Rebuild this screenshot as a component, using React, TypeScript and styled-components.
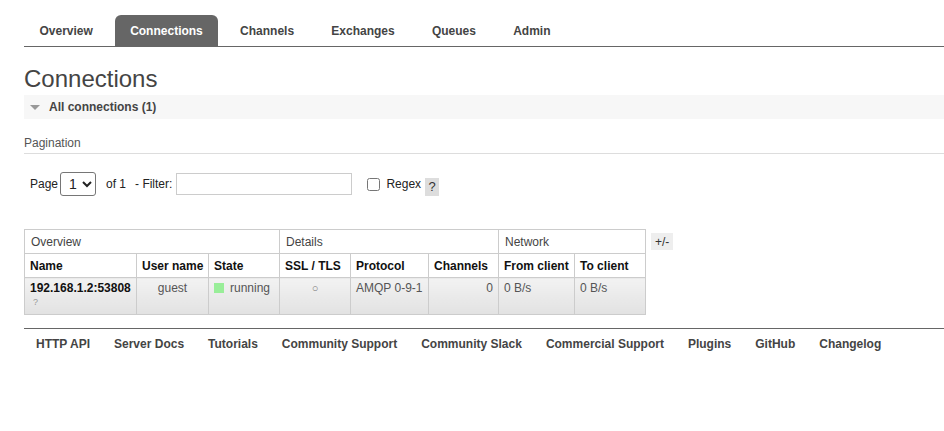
import React from "react";
import styled, { createGlobalStyle } from "styled-components";

const Global = createGlobalStyle`
  html, body { margin: 0; padding: 0; background: #fff; }
  body { font-family: "Liberation Sans", Arial, sans-serif; font-size: 12px; color: #444; }
`;

const Page = styled.div`
  padding: 15px 0 0 24px;
`;

const Tabs = styled.ul`
  display: flex;
  gap: 7.25px;
  list-style: none;
  margin: 0;
  padding: 0 0 0 0.5px;
  border-bottom: 1px solid #666;
`;

const Tab = styled.li<{ $active?: boolean }>`
  height: 31px;
  padding: 0 15px;
  display: flex;
  align-items: center;
  font-weight: bold;
  font-size: 12px;
  border-radius: 6px 6px 0 0;
  color: ${(p) => (p.$active ? "#fff" : "#444")};
  background: ${(p) => (p.$active ? "#666" : "transparent")};
`;

const Title = styled.h1`
  margin: 18px 0 2px;
  font-size: 24px;
  font-weight: normal;
  line-height: 28px;
  color: #444;
`;

const SectionBar = styled.div`
  height: 24px;
  background: #f7f7f7;
  display: flex;
  align-items: center;
  gap: 9px;
  padding-left: 6px;
  font-weight: bold;
  color: #444;
`;

const Triangle = styled.span`
  width: 0;
  height: 0;
  border-left: 5px solid transparent;
  border-right: 5px solid transparent;
  border-top: 5px solid #999;
  margin-top: 1px;
`;

const SubTitle = styled.div`
  margin-top: 17px;
  padding-bottom: 3px;
  border-bottom: 1px solid #ddd;
  line-height: 14px;
  color: #555;
`;

const FilterRow = styled.div`
  display: flex;
  align-items: center;
  margin-top: 18px;
  padding-left: 6px;
  color: #222;
  font-size: 12px;
`;

const Select = styled.select`
  margin-left: 2px;
  width: 36px;
  height: 24px;
  font-family: "Liberation Sans", Arial, sans-serif;
  font-size: 14px;
  color: #222;
  border: 1px solid #767676;
  border-radius: 3px;
  background: #fff;
  padding: 0 0 0 4px;
`;

const Label = styled.span<{ $ml?: number }>`
  margin-left: ${(p) => p.$ml ?? 0}px;
`;

const TextInput = styled.input`
  margin-left: 4px;
  width: 176px;
  height: 22px;
  box-sizing: border-box;
  border: 1px solid #ccc;
  padding: 0 4px;
`;

const Check = styled.input`
  margin: 0 0 0 15px;
  width: 13px;
  height: 13px;
`;

const Help = styled.span`
  margin: 5px 0 0 4px;
  background: #ddd;
  width: 14px;
  height: 18px;
  display: inline-flex;
  align-items: center;
  justify-content: center;
  font-size: 13px;
  color: #333;
`;

const TableWrap = styled.div`
  display: flex;
  align-items: flex-start;
  gap: 5px;
  margin-top: 33px;
`;

const Table = styled.table`
  border-collapse: collapse;
  table-layout: fixed;
  width: 621px;
`;

const GroupTh = styled.th`
  height: 24px;
  box-sizing: border-box;
  border: 1px solid #ccc;
  text-align: left;
  padding: 0 6px;
  font-weight: normal;
  color: #444;
  background: #fff;
`;

const ColTh = styled.th`
  height: 24px;
  box-sizing: border-box;
  border: 1px solid #ccc;
  text-align: left;
  padding: 0 5px;
  font-weight: bold;
  color: #111;
  background: #fff;
  white-space: nowrap;
`;

const Td = styled.td<{ $align?: string }>`
  border: 1px solid #ccc;
  vertical-align: top;
  padding: 3px 5px 4px;
  line-height: 14px;
  text-align: ${(p) => p.$align ?? "left"};
  color: #555;
  background: linear-gradient(#f2f2f2, #e2e2e2);
  white-space: nowrap;
`;

const NameLink = styled.div`
  font-weight: bold;
  color: #111;
`;

const Hint = styled.div`
  font-size: 9px;
  color: #999;
  padding-left: 3px;
  line-height: 15px;
`;

const StateDot = styled.span`
  display: inline-block;
  width: 10px;
  height: 10px;
  background: #99ee99;
  margin-right: 6px;
  vertical-align: -1px;
`;

const Circle = styled.span`
  font-size: 11px;
  color: #777;
`;

const Toggle = styled.span`
  margin-top: 4px;
  background: #eee;
  padding: 2px 4px 1px;
  line-height: 14px;
  color: #333;
`;

const Footer = styled.ul`
  list-style: none;
  margin: 13px 0 0;
  padding: 8px 0 0;
  border-top: 1px solid #666;
  display: flex;
`;

const FooterLink = styled.li`
  padding: 0 12px;
  font-weight: bold;
  color: #444;
  line-height: 14px;
`;

const tabs = ["Overview", "Connections", "Channels", "Exchanges", "Queues", "Admin"];
const links = [
  "HTTP API",
  "Server Docs",
  "Tutorials",
  "Community Support",
  "Community Slack",
  "Commercial Support",
  "Plugins",
  "GitHub",
  "Changelog",
];
const widths = [112, 72, 71, 71, 78, 70, 76, 71];

export default function App() {
  return (
    <>
      <Global />
      <Page>
        <Tabs>
          {tabs.map((t) => (
            <Tab key={t} $active={t === "Connections"}>
              {t}
            </Tab>
          ))}
        </Tabs>
        <Title>Connections</Title>
        <SectionBar>
          <Triangle />
          All connections (1)
        </SectionBar>
        <SubTitle>Pagination</SubTitle>
        <FilterRow>
          <span>Page</span>
          <Select defaultValue="1">
            <option value="1">1</option>
          </Select>
          <Label $ml={10}>of 1</Label>
          <Label $ml={9}>- Filter:</Label>
          <TextInput type="text" />
          <Check type="checkbox" />
          <Label $ml={6}>Regex</Label>
          <Help>?</Help>
        </FilterRow>
        <TableWrap>
          <Table>
            <colgroup>
              {widths.map((w, i) => (
                <col key={i} style={{ width: w }} />
              ))}
            </colgroup>
            <thead>
              <tr>
                <GroupTh colSpan={3}>Overview</GroupTh>
                <GroupTh colSpan={3}>Details</GroupTh>
                <GroupTh colSpan={2}>Network</GroupTh>
              </tr>
              <tr>
                <ColTh>Name</ColTh>
                <ColTh>User name</ColTh>
                <ColTh>State</ColTh>
                <ColTh>SSL / TLS</ColTh>
                <ColTh>Protocol</ColTh>
                <ColTh>Channels</ColTh>
                <ColTh>From client</ColTh>
                <ColTh>To client</ColTh>
              </tr>
            </thead>
            <tbody>
              <tr>
                <Td>
                  <NameLink>192.168.1.2:53808</NameLink>
                  <Hint>?</Hint>
                </Td>
                <Td $align="center">guest</Td>
                <Td>
                  <StateDot />
                  running
                </Td>
                <Td $align="center">
                  <Circle>○</Circle>
                </Td>
                <Td>AMQP 0-9-1</Td>
                <Td $align="right">0</Td>
                <Td>0 B/s</Td>
                <Td>0 B/s</Td>
              </tr>
            </tbody>
          </Table>
          <Toggle>+/-</Toggle>
        </TableWrap>
        <Footer>
          {links.map((l) => (
            <FooterLink key={l}>{l}</FooterLink>
          ))}
        </Footer>
      </Page>
    </>
  );
}
